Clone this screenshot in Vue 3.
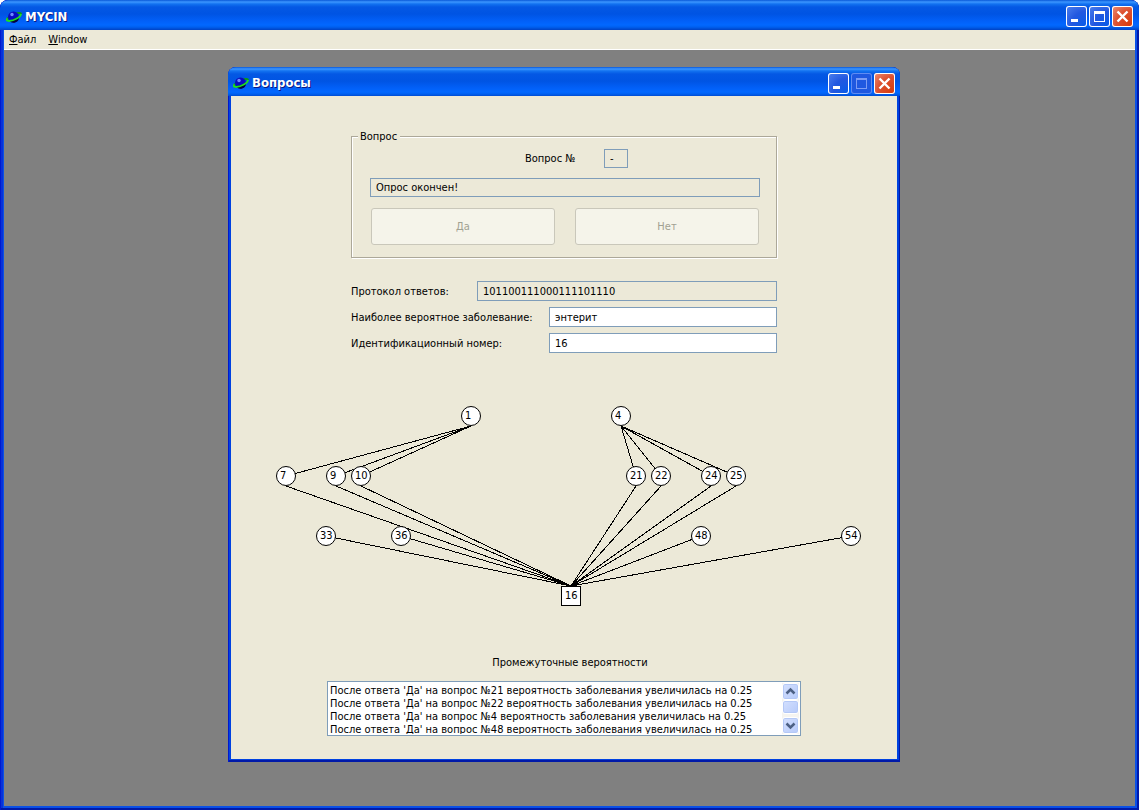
<script setup>
const nodes = [
  { id: 1, x: 240, y: 20 },
  { id: 4, x: 390, y: 20 },
  { id: 7, x: 55, y: 80 },
  { id: 9, x: 105, y: 80 },
  { id: 10, x: 130, y: 80 },
  { id: 21, x: 405, y: 80 },
  { id: 22, x: 430, y: 80 },
  { id: 24, x: 480, y: 80 },
  { id: 25, x: 505, y: 80 },
  { id: 33, x: 95, y: 140 },
  { id: 36, x: 170, y: 140 },
  { id: 48, x: 470, y: 140 },
  { id: 54, x: 620, y: 140 },
]
const byId = Object.fromEntries(nodes.map((n) => [n.id, n]))
const goal = { id: 16, x: 340, y: 190 }

const lines = [
  ...[[1, 7], [1, 9], [1, 10], [4, 21], [4, 22], [4, 24], [4, 25]].map(([a, b]) => ({
    x1: byId[a].x, y1: byId[a].y + 10, x2: byId[b].x, y2: byId[b].y,
  })),
  ...[7, 9, 10, 21, 22, 24, 25].map((a) => ({
    x1: byId[a].x, y1: byId[a].y + 10, x2: goal.x, y2: goal.y,
  })),
  ...[33, 36, 48, 54].map((a) => ({
    x1: byId[a].x, y1: byId[a].y, x2: goal.x, y2: goal.y,
  })),
]

const log = [21, 22, 4, 48]
</script>

<template>
  <div class="frame">
    <header class="titlebar">
      <svg class="logo" width="16" height="16" viewBox="0 0 16 16" aria-hidden="true">
        <path d="M1 11 C2 8 6 6 9 5 C12 4 15 3.500 15 5" fill="none" stroke="#0c9a18" stroke-width="2" />
        <circle cx="7.500" cy="8" r="5.500" fill="#0a0ac0" />
        <path d="M3.500 12 A5.500 5.500 0 0 0 13 8 Z" fill="#04043c" />
        <circle cx="6" cy="5.500" r="1.700" fill="#6a8cff" />
        <path d="M15 5 C15 8 8 11.500 3 12 C0 12 0 11 1.500 9.500" fill="none" stroke="#1ee01e" stroke-width="1.800" />
      </svg>
      <h1 class="caption">MYCIN</h1>
      <div class="controls">
        <button class="ctl" type="button" aria-label="Minimize">
          <svg width="21" height="21" viewBox="0 0 21 21"><path d="M5 13h7v3H5z" fill="#fff" /></svg>
        </button>
        <button class="ctl" type="button" aria-label="Maximize">
          <svg width="21" height="21" viewBox="0 0 21 21"><path d="M5 5h11v11H5zM6 8v7h9V8z" fill="#fff" fill-rule="evenodd" /></svg>
        </button>
        <button class="ctl close" type="button" aria-label="Close">
          <svg width="21" height="21" viewBox="0 0 21 21"><path d="M5.500 5.500l10 10M15.500 5.500l-10 10" stroke="#fff" stroke-width="2.400" /></svg>
        </button>
      </div>
    </header>

    <nav class="menubar">
      <button type="button"><u>Ф</u>айл</button>
      <button type="button"><u>W</u>indow</button>
    </nav>

    <main class="desktop">
      <section class="window">
        <header class="titlebar inner">
          <svg class="logo" width="16" height="16" viewBox="0 0 16 16" aria-hidden="true">
            <path d="M1 11 C2 8 6 6 9 5 C12 4 15 3.500 15 5" fill="none" stroke="#0c9a18" stroke-width="2" />
            <circle cx="7.500" cy="8" r="5.500" fill="#0a0ac0" />
            <path d="M3.500 12 A5.500 5.500 0 0 0 13 8 Z" fill="#04043c" />
            <circle cx="6" cy="5.500" r="1.700" fill="#6a8cff" />
            <path d="M15 5 C15 8 8 11.500 3 12 C0 12 0 11 1.500 9.500" fill="none" stroke="#1ee01e" stroke-width="1.800" />
          </svg>
          <h2 class="caption">Вопросы</h2>
          <div class="controls">
            <button class="ctl" type="button" aria-label="Minimize">
              <svg width="21" height="21" viewBox="0 0 21 21"><path d="M5 13h7v3H5z" fill="#fff" /></svg>
            </button>
            <button class="ctl off" type="button" aria-label="Maximize" disabled>
              <svg width="21" height="21" viewBox="0 0 21 21"><path d="M5 5h11v11H5zM6 7v8h9V7z" fill="#7c9cf4" fill-rule="evenodd" /></svg>
            </button>
            <button class="ctl close" type="button" aria-label="Close">
              <svg width="21" height="21" viewBox="0 0 21 21"><path d="M5.500 5.500l10 10M15.500 5.500l-10 10" stroke="#fff" stroke-width="2.400" /></svg>
            </button>
          </div>
        </header>

        <div class="body">
          <fieldset class="group">
            <legend>Вопрос</legend>
            <div class="number">
              <label for="num">Вопрос №</label>
              <input id="num" class="field small" type="text" value="-" readonly />
            </div>
            <input class="field question" type="text" value="Опрос окончен!" aria-label="Вопрос" readonly />
            <div class="answers">
              <button type="button" disabled>Да</button>
              <button type="button" disabled>Нет</button>
            </div>
          </fieldset>

          <form class="results" @submit.prevent>
            <div class="row">
              <label class="short" for="protocol">Протокол ответов:</label>
              <input id="protocol" class="field" type="text" value="101100111000111101110" readonly />
            </div>
            <div class="row">
              <label for="illness">Наиболее вероятное заболевание:</label>
              <input id="illness" class="field editable" type="text" value="энтерит" />
            </div>
            <div class="row">
              <label for="ident">Идентификационный номер:</label>
              <input id="ident" class="field editable" type="text" value="16" />
            </div>
          </form>

          <svg class="graph" width="666" height="220" viewBox="0 0 666 220">
            <line
              v-for="(l, i) in lines" :key="i" class="edge"
              :x1="l.x1" :y1="l.y1" :x2="l.x2" :y2="l.y2"
            />
            <g v-for="n in nodes" :key="n.id">
              <circle class="shape" :cx="n.x" :cy="n.y" r="9.500" />
              <text :x="n.x - 6" :y="n.y + 3">{{ n.id }}</text>
            </g>
            <rect class="shape" :x="goal.x - 9.5" :y="goal.y + 0.5" width="19" height="19" />
            <text :x="goal.x - 6" :y="goal.y + 13">{{ goal.id }}</text>
          </svg>

          <h3 class="heading">Промежуточные вероятности</h3>
          <div class="listbox">
            <ul>
              <li v-for="q in log" :key="q">После ответа 'Да' на вопрос №{{ q }} вероятность заболевания увеличилась на 0.25</li>
            </ul>
            <div class="scroll">
              <button type="button" aria-label="Scroll up">
                <svg width="15" height="15" viewBox="0 0 15 15"><path d="M3.500 9.500l4-4 4 4" /></svg>
              </button>
              <div class="thumb"></div>
              <button class="down" type="button" aria-label="Scroll down">
                <svg width="15" height="15" viewBox="0 0 15 15"><path d="M3.500 5.500l4 4 4-4" /></svg>
              </button>
            </div>
          </div>
        </div>
      </section>
    </main>
  </div>
</template>

<style>
body {
  background: #fff;
}
</style>

<style scoped>
* {
  box-sizing: border-box;
}

.frame {
  display: flex;
  flex-direction: column;
  min-height: 100vh;
  padding: 0 4px 4px;
  overflow: hidden;
  border-radius: 8px 8px 0 0;
  background: #0a50e6;
  box-shadow: inset 1px 0 #0019cf, inset -2px 0 #0019a8, inset 0 -2px #0019a8, inset 3px 0 #0831d9;
  color: #000;
  font: 11px/13px "DejaVu Sans Condensed", "Noto Sans", sans-serif;
}

button,
input {
  font: inherit;
}

.titlebar {
  display: flex;
  align-items: center;
  height: 30px;
  margin: 0 -4px;
  padding: 3px 6px 0;
  border-radius: 8px 8px 0 0;
  background: linear-gradient(#0958d8 0, #3c96ff 2px, #1272f0 4px, #0458e4 7px, #0054e3 14px, #0260f8 21px, #0268ff 25px, #0060f0 27px, #0042c4 30px);
}

.titlebar.inner {
  height: 29px;
  margin: 0 -3px;
  padding: 3px 5px 0;
}

.logo {
  flex: none;
  margin-right: 3px;
}

.caption {
  flex: 1;
  margin: 0;
  color: #fff;
  font: bold 13px/16px "DejaVu Sans Condensed", "Noto Sans", sans-serif;
  text-shadow: 1px 1px #0a1883;
}

.controls {
  display: flex;
  gap: 2px;
}

.ctl {
  width: 21px;
  height: 21px;
  padding: 0;
  overflow: hidden;
  border: 0;
  border-radius: 3px;
  background: radial-gradient(circle at 90% 90%, #0a5ce8, #2358e0 50%, #4f82ee 100%);
  box-shadow: inset 0 0 0 1px #fff;
}

.ctl svg {
  display: block;
}

.ctl.close {
  background: radial-gradient(circle at 90% 90%, #d83c0c, #dc5030 55%, #ee9078 100%);
}

.ctl.off {
  background: #1f58e0;
  box-shadow: inset 0 0 0 1px #5f8cf2;
}

.menubar {
  display: flex;
  gap: 12px;
  height: 20px;
  padding: 0 5px;
  border-bottom: 1px solid #fff;
  background: #ece9d8;
}

.menubar button {
  padding: 0;
  border: 0;
  background: none;
  color: #000;
}

.desktop {
  position: relative;
  flex: 1;
  background: #808080;
}

.window {
  position: absolute;
  top: 17px;
  left: 224px;
  width: 672px;
  padding: 0 3px 3px;
  border-radius: 8px 8px 0 0;
  background: #0042e0;
  box-shadow: inset 1px 0 #0019cf, inset -1px 0 #0019a8, inset 0 -2px #0019a8;
}

.body {
  display: flex;
  flex-direction: column;
  align-items: center;
  padding: 34px 0 23px;
  background: #ece9d8;
}

.group {
  width: 426px;
  margin: 0;
  padding: 6px 16px 12px 18px;
  border: 1px solid #aca899;
  box-shadow: inset 1px 1px #fff, 1px 1px #fff;
}

.group legend {
  margin-left: -12px;
  padding: 0 3px 0 2px;
  background: #ece9d8;
}

.number {
  display: flex;
  align-items: center;
  padding-left: 155px;
}

.number label {
  width: 79px;
}

.field {
  height: 20px;
  padding: 0 5px;
  border: 1px solid #7f9db9;
  border-radius: 0;
  outline: 0;
  background: #ece9d8;
  color: #000;
}

.field.editable {
  background: #fff;
}

.group .field {
  height: 19px;
}

.field.small {
  width: 24px;
}

.question {
  display: block;
  width: 100%;
  margin-top: 10px;
}

.answers {
  display: flex;
  gap: 20px;
  margin-top: 11px;
  padding: 0 1px;
}

.answers button {
  flex: 1;
  height: 37px;
  border: 1px solid #c9c7ba;
  border-radius: 3px;
  background: #f5f4ea;
  color: #a1a192;
}

.results {
  display: flex;
  flex-direction: column;
  gap: 6px;
  width: 426px;
  margin-top: 23px;
}

.row {
  display: flex;
  align-items: center;
}

.row label {
  width: 198px;
}

.row label.short {
  width: 126px;
}

.row .field {
  flex: 1;
  min-width: 0;
}

.graph {
  display: block;
  width: 100%;
  margin-top: 43px;
}

.edge {
  stroke: #000;
  stroke-width: 1;
  shape-rendering: crispEdges;
}

.shape {
  fill: #fff;
  stroke: #000;
  stroke-width: 1;
}

.heading {
  margin: 40px 0 0;
  padding-left: 12px;
  font: inherit;
}

.listbox {
  display: flex;
  width: 474px;
  height: 55px;
  margin-top: 12px;
  padding: 1px;
  border: 1px solid #7f9db9;
  background: #fff;
}

.listbox ul {
  flex: 1;
  margin: 0;
  padding: 1px 1px 0;
  overflow: hidden;
  list-style: none;
  white-space: nowrap;
}

.scroll {
  display: flex;
  flex-direction: column;
  width: 17px;
  background: #f5f4f0;
}

.scroll button,
.thumb {
  width: 17px;
  height: 17px;
  padding: 0;
  border: 1px solid #fff;
  border-radius: 3px;
  background: linear-gradient(135deg, #d4e0fe, #b6cafa);
  box-shadow: inset 0 0 0 1px #b4c8f6;
}

.scroll svg {
  display: block;
}

.scroll path {
  fill: none;
  stroke: #4d6185;
  stroke-width: 2.500;
}

.thumb {
  height: 14px;
}

.scroll .down {
  margin-top: auto;
}
</style>
